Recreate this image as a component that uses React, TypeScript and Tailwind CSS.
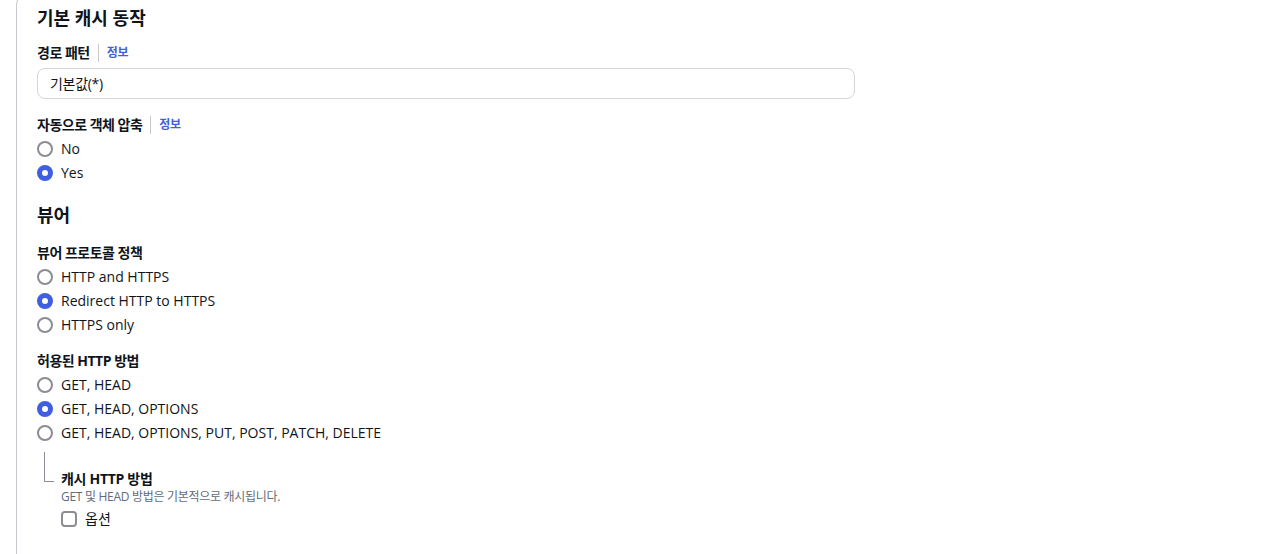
import React, { useState } from 'react';

type Option = { value: string; label: string };

const font = { fontFamily: '"Open Sans", "Noto Sans CJK KR", sans-serif' };

// Radio group like the Cloudscape one
const RadioGroup = ({ options, value, onChange }: { options: Option[]; value: string; onChange: (v: string) => void }) => (
  <div className="flex flex-col">
    {options.map((opt) => (
      <label key={opt.value} className="flex h-6 items-center gap-2 cursor-pointer" onClick={() => onChange(opt.value)}>
        {value === opt.value ? (
          <span className="box-border h-4 w-4 rounded-full border-[5px] border-[#3f5ee0] bg-white" />
        ) : (
          <span className="box-border h-4 w-4 rounded-full border-2 border-[#8c8c94] bg-white" />
        )}
        <span className="text-sm text-[#0f141a]">{opt.label}</span>
      </label>
    ))}
  </div>
);

const FieldLabel = ({ text, info }: { text: string; info?: boolean }) => (
  <div className="flex h-5 items-center">
    <span className="text-sm font-bold tracking-[-0.5px] text-[#0f141a]">{text}</span>
    {info && (
      <>
        <span className="mx-2 h-[18px] w-px bg-[#c6c6cd]" />
        <span className="text-xs font-bold tracking-[-0.3px] text-[#3f5ee0]">정보</span>
      </>
    )}
  </div>
);

const App = () => {
  const [compress, setCompress] = useState('yes');
  const [protocol, setProtocol] = useState('redirect');
  const [methods, setMethods] = useState('options');
  const [cache, setCache] = useState(false);

  return (
    <div className="h-[554px] overflow-hidden bg-white" style={font}>
      <div className="-mt-[10px] ml-4 rounded-tl-2xl border-l border-t border-[#c6c6cd] pl-5 pt-[16px] pb-10">
        <h2 className="h-[22px] text-lg leading-[22px] font-bold text-[#0f141a]">기본 캐시 동작</h2>

        <div className="mt-[14px]">
          <FieldLabel text="경로 패턴" info />
        </div>
        <div className="mt-[5px] flex h-[31px] w-[818px] items-center rounded-lg border border-[#d5d5dc] px-3">
          <span className="text-sm tracking-[-0.3px] text-[#0f141a]">기본값(*)</span>
        </div>

        <div className="mt-4">
          <FieldLabel text="자동으로 객체 압축" info />
        </div>
        <div className="mt-[2px]">
          <RadioGroup
            value={compress}
            onChange={setCompress}
            options={[
              { value: 'no', label: 'No' },
              { value: 'yes', label: 'Yes' },
            ]}
          />
        </div>

        <h2 className="mt-[19px] h-[22px] text-lg leading-[22px] font-bold text-[#0f141a]">뷰어</h2>

        <div className="mt-[17px]">
          <FieldLabel text="뷰어 프로토콜 정책" />
        </div>
        <div className="mt-[2px]">
          <RadioGroup
            value={protocol}
            onChange={setProtocol}
            options={[
              { value: 'both', label: 'HTTP and HTTPS' },
              { value: 'redirect', label: 'Redirect HTTP to HTTPS' },
              { value: 'https', label: 'HTTPS only' },
            ]}
          />
        </div>

        <div className="mt-[14px]">
          <FieldLabel text="허용된 HTTP 방법" />
        </div>
        <div className="mt-[2px]">
          <RadioGroup
            value={methods}
            onChange={setMethods}
            options={[
              { value: 'get', label: 'GET, HEAD' },
              { value: 'options', label: 'GET, HEAD, OPTIONS' },
              { value: 'all', label: 'GET, HEAD, OPTIONS, PUT, POST, PATCH, DELETE' },
            ]}
          />
        </div>

        {/* nested setting with tree connector */}
        <div className="flex">
          <div className="mt-[7px] ml-[7px] h-[30px] w-[10px] border-b border-l border-[#8c8c94]" />
          <div className="ml-[7px] mt-[24px] flex flex-col">
            <span className="h-5 text-sm leading-5 font-bold tracking-[-0.3px] text-[#0f141a]">캐시 HTTP 방법</span>
            <span className="h-4 text-xs leading-4 tracking-[-0.3px] text-[#5f6b7a]">GET 및 HEAD 방법은 기본적으로 캐시됩니다.</span>
            <label className="mt-[2px] flex h-6 items-center gap-2 cursor-pointer" onClick={() => setCache(!cache)}>
              <span
                className={
                  cache
                    ? 'box-border h-4 w-4 rounded border-2 border-[#3f5ee0] bg-[#3f5ee0]'
                    : 'box-border h-4 w-4 rounded border-2 border-[#8c8c94] bg-white'
                }
              />
              <span className="text-sm text-[#0f141a]">옵션</span>
            </label>
          </div>
        </div>
      </div>
    </div>
  );
};

export default App;
